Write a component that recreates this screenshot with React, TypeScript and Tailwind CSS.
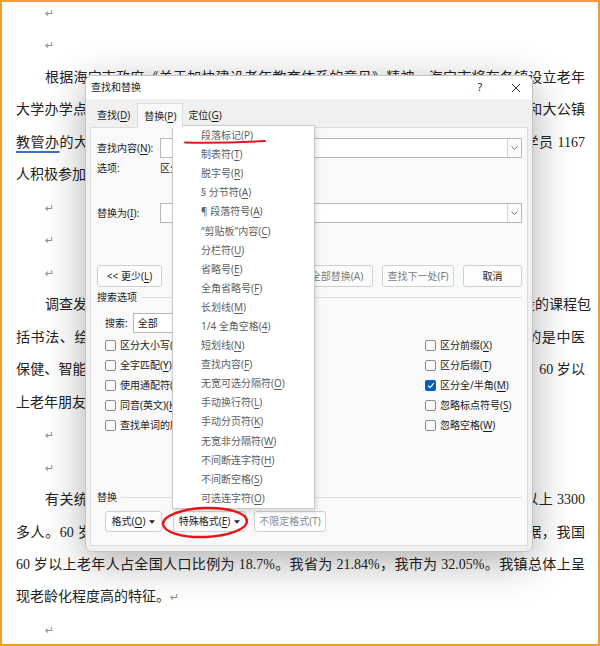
import React from "react";

const dlg = "font-['Noto_Sans','Noto_Sans_CJK_SC',sans-serif]";

function K({ k }: { k: string }) {
  return <span className="underline decoration-[0.8px] underline-offset-[1.5px]">{k}</span>;
}

function Mark() {
  return <span className="font-['DejaVu_Sans',sans-serif] text-[11px] text-[#8c8c8c]">↵</span>;
}

function Line({ children, indent, full }: { children?: React.ReactNode; indent?: boolean; full?: boolean }) {
  return (
    <div
      className={
        "h-[32.47px] overflow-visible " +
        (indent ? "indent-[29px] " : "") +
        (full ? "text-justify [text-align-last:justify] whitespace-nowrap" : "whitespace-nowrap")
      }
    >
      {children}
    </div>
  );
}

function Document() {
  return (
    <div className="-mt-[5px] pl-[14px] pr-[13px] font-['Liberation_Serif','Noto_Sans_CJK_SC',serif] text-[14px] leading-[32.47px] text-[#222]">
      <Line indent><Mark /></Line>
      <Line indent><Mark /></Line>
      <Line indent full>根据海宁市政府《关于加快建设老年教育体系的意见》精神，海宁市将在各镇设立老年</Line>
      <Line full>大学办学点，由镇成人文化技术学校负责具体实施。目前已经在周王庙镇、丁桥镇和大公镇</Line>
      <Line full>
        <span className="underline decoration-[#3f6fd0] decoration-[1.5px] underline-offset-[4px]">教管办</span>
        的大力支持下开设老年大学教学点，开设书法、绘画等课程，已累计吸引学员 1167
      </Line>
      <Line>人积极参加。</Line>
      <Line indent><Mark /></Line>
      <Line indent><Mark /></Line>
      <Line indent><Mark /></Line>
      <Line indent full>调查发现，我镇老年大学深受广大老年朋友的欢迎。目前，全镇各个教学点开设的课程包</Line>
      <Line full>括书法、绘画、摄影、舞蹈、太极拳、合唱、声乐等十余门课程，其中最受欢迎的是中医</Line>
      <Line full>保健、智能手机使用和书法三门课程。据不完全统计，参加老年大学学习的学员中，60 岁以</Line>
      <Line>上老年朋友占总人数的九成以上。</Line>
      <Line indent><Mark /></Line>
      <Line indent><Mark /></Line>
      <Line indent full>有关统计数据显示，截至去年底，我镇现有户籍人口约 4.6 万人，其中 60 岁以上 3300</Line>
      <Line full>多人。60 岁以上老年人口占全镇总人口的 27.5%。根据全国第七次人口普查的数据，我国</Line>
      <Line full>60 岁以上老年人占全国人口比例为 18.7%。我省为 21.84%，我市为 32.05%。我镇总体上呈</Line>
      <Line>现老龄化程度高的特征。<Mark /></Line>
      <Line indent><Mark /></Line>
    </div>
  );
}

function Btn({ children, className = "" }: { children: React.ReactNode; className?: string }) {
  return (
    <div
      className={
        "flex h-full items-center justify-center rounded-[3px] border border-[#d0d0d0] bg-[#fdfdfd] " + className
      }
    >
      {children}
    </div>
  );
}

function Caret() {
  return (
    <svg width="6" height="4" viewBox="0 0 6 4" className="ml-[4px]">
      <path d="M0 0.3H6L3 3.7Z" fill="#222" />
    </svg>
  );
}

function Chevron() {
  return (
    <span className="flex h-full w-[14px] items-center justify-center border-l border-[#d4d4d4] bg-[#fbfbfb]">
      <svg width="7" height="4" viewBox="0 0 7 4">
        <path d="M0.5 0.5L3.5 3.5L6.5 0.5" fill="none" stroke="#6a6a6a" strokeWidth="0.9" />
      </svg>
    </span>
  );
}

function Check({ label, k, checked }: { label: string; k: string; checked?: boolean }) {
  return (
    <div className="flex h-[20px] items-center gap-[4px] whitespace-nowrap">
      {checked ? (
        <span className="flex h-[11px] w-[11px] shrink-0 items-center justify-center rounded-[2px] bg-[#005fb8]">
          <svg width="8" height="7" viewBox="0 0 8 7">
            <path d="M1 3.6L3 5.6L7 1.2" stroke="#fff" strokeWidth="1.2" fill="none" />
          </svg>
        </span>
      ) : (
        <span className="h-[11px] w-[11px] shrink-0 rounded-[2px] border border-[#8d8d8d] bg-[#fcfcfc]" />
      )}
      <span>
        {label}(<K k={k} />)
      </span>
    </div>
  );
}

function Dialog() {
  return (
    <div
      className={
        "absolute left-[83px] top-[73px] flex h-[477px] w-[448px] flex-col overflow-hidden rounded-[7px] border border-[#c4c4c4] bg-[#f0f0f0] text-[10px] text-[#1b1b1b] shadow-[0_10px_40px_rgba(0,0,0,0.32)] " +
        dlg
      }
    >
      <div className="flex h-[23px] shrink-0 items-center bg-white pl-[5px] pr-[11px]">
        <span>查找和替换</span>
        <div className="ml-auto flex items-center gap-[26px]">
          <span className="w-[10px] text-center text-[11px]">?</span>
          <svg width="10" height="10" viewBox="0 0 10 10">
            <path d="M1 1L9 9M9 1L1 9" stroke="#222" strokeWidth="0.9" />
          </svg>
        </div>
      </div>
      <div className="flex flex-1 flex-col px-[4px]">
        <div className="flex h-[28px] items-end">
          <div className="flex h-[24px] items-center px-[7px]">
            查找(<K k="D" />)
          </div>
          <div className="relative z-10 -mb-px flex h-[25px] items-center border border-b-0 border-[#dcdcdc] bg-[#f9f9f9] px-[6px]">
            替换(<K k="P" />)
          </div>
          <div className="flex h-[24px] items-center px-[5px]">
            定位(<K k="G" />)
          </div>
        </div>
        <div className="flex h-[419px] flex-col border border-[#dcdcdc] bg-[#f9f9f9]">
          <div className="mt-[10px] flex h-[20px] items-center pl-[6px] pr-[5px]">
            <span className="w-[63px]">
              查找内容(<K k="N" />):
            </span>
            <div className="flex h-full flex-1 justify-end border border-[#b8b8b8] bg-white">
              <Chevron />
            </div>
          </div>
          <div className="flex h-[20px] items-center pl-[6px]">
            <span className="w-[63px]">选项:</span>
            <span>区分全/半角</span>
          </div>
          <div className="mt-[25px] flex h-[20px] items-center pl-[6px] pr-[5px]">
            <span className="w-[63px]">
              替换为(<K k="I" />):
            </span>
            <div className="flex h-full flex-1 justify-end border border-[#b8b8b8] bg-white">
              <Chevron />
            </div>
          </div>
          <div className="mt-[42px] flex h-[22px] pl-[6px] pr-[5px]">
            <Btn className="w-[65px]">
              &lt;&lt; 更少(<K k="L" />)
            </Btn>
            <div className="ml-auto flex gap-[9px]">
              <Btn className="w-[72px]">
                替换(<K k="R" />)
              </Btn>
              <Btn className="w-[72px] text-[#7a7a7a]">全部替换(A)</Btn>
              <Btn className="w-[72px] text-[#7a7a7a]">查找下一处(F)</Btn>
              <Btn className="w-[59px] border-[#bdbdbd]">取消</Btn>
            </div>
          </div>
          <div className="mt-[4px] flex h-[12px] items-center gap-[4px] pl-[6px] pr-[5px]">
            <span>搜索选项</span>
            <div className="h-px flex-1 bg-[#dedede]" />
          </div>
          <div className="mt-[10px] flex h-[20px] items-center pl-[14px]">
            <span>搜索:</span>
            <div className="ml-[5px] flex h-full w-[120px] items-center border border-[#b8b8b8] bg-white pl-[4px]">
              全部
            </div>
          </div>
          <div className="mt-[2px] grid grid-cols-[320px_1fr] pl-[14px]">
            <div className="flex flex-col">
              <Check label="区分大小写" k="H" />
              <Check label="全字匹配" k="Y" />
              <Check label="使用通配符" k="U" />
              <Check label="同音(英文)" k="K" />
              <Check label="查找单词的所有形式(英文)" k="W" />
            </div>
            <div className="flex flex-col">
              <Check label="区分前缀" k="X" />
              <Check label="区分后缀" k="T" />
              <Check label="区分全/半角" k="M" checked />
              <Check label="忽略标点符号" k="S" />
              <Check label="忽略空格" k="W" />
            </div>
          </div>
          <div className="mt-[56px] flex h-[12px] items-center gap-[4px] pl-[6px] pr-[5px]">
            <span>替换</span>
            <div className="h-px flex-1 bg-[#dedede]" />
          </div>
          <div className="mt-[8px] flex h-[21px] pl-[14px]">
            <Btn className="w-[57px]">
              格式(<K k="O" />)
              <Caret />
            </Btn>
            <Btn className="ml-[11px] w-[73px] border-[#a9a9a9]">
              特殊格式(<K k="E" />)
              <Caret />
            </Btn>
            <Btn className="ml-[8px] w-[72px] text-[#8a8a8a]">不限定格式(T)</Btn>
          </div>
        </div>
      </div>
    </div>
  );
}

const items: [string, string][] = [
  ["段落标记", "P"],
  ["制表符", "T"],
  ["脱字号", "R"],
  ["§ 分节符", "A"],
  ["¶ 段落符号", "A"],
  ["“剪贴板”内容", "C"],
  ["分栏符", "U"],
  ["省略号", "E"],
  ["全角省略号", "F"],
  ["长划线", "M"],
  ["1/4 全角空格", "4"],
  ["短划线", "N"],
  ["查找内容", "F"],
  ["无宽可选分隔符", "O"],
  ["手动换行符", "L"],
  ["手动分页符", "K"],
  ["无宽非分隔符", "W"],
  ["不间断连字符", "H"],
  ["不间断空格", "S"],
  ["可选连字符", "O"],
];

function SpecialMenu() {
  return (
    <div
      className={
        "absolute left-[170px] top-[123px] w-[143px] border border-[#cacaca] bg-white text-[10px] text-[#5e5e5e] shadow-[2px_3px_5px_rgba(0,0,0,0.12)] " +
        dlg
      }
    >
      {items.map(([t, k], i) => (
        <div key={i} className="flex h-[19.1px] items-center whitespace-nowrap pl-[28px]">
          {t}(<K k={k} />)
        </div>
      ))}
    </div>
  );
}

function Marks() {
  return (
    <svg className="pointer-events-none absolute left-0 top-0" width="596" height="642" viewBox="0 0 596 642">
      <path d="M183 140.6Q222 141.4 263 139" fill="none" stroke="#e3161b" strokeWidth="2" strokeLinecap="round" />
      <ellipse
        cx="203"
        cy="520.5"
        rx="42"
        ry="14.5"
        fill="none"
        stroke="#e3161b"
        strokeWidth="2.4"
        transform="rotate(-2 203 520.5)"
      />
    </svg>
  );
}

export default function App() {
  return (
    <div className="relative h-[646px] w-[600px] overflow-hidden border-2 border-[#f39c34] bg-white">
      <Document />
      <Dialog />
      <SpecialMenu />
      <Marks />
    </div>
  );
}
